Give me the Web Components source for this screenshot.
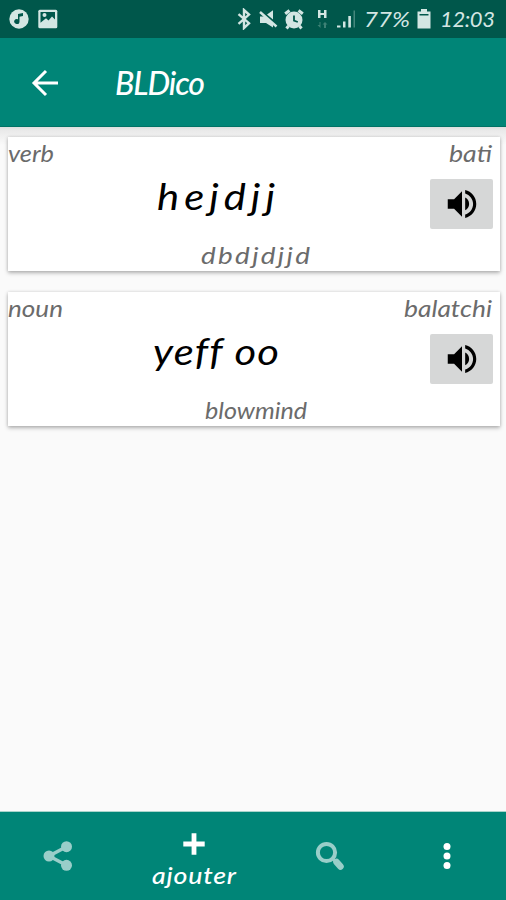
<!DOCTYPE html>
<html lang="fr">
<head>
<meta charset="utf-8">
<title>BLDico</title>
<style>
    body {
        margin: 0;
        background: #fafafa;
        font-family: Lato, "Open Sans", sans-serif;
        font-style: italic;
    }
</style>
</head>
<body>
<dico-app>
    <status-bar slot="status" battery="77%" time="12:03"></status-bar>
    <app-bar slot="header"><fit-text width="90">BLDico</fit-text></app-bar>
    <word-card>
        <fit-text slot="kind" width="46">verb</fit-text>
        <fit-text slot="language" width="43">bati</fit-text>
        <fit-text slot="word" width="118">hejdjj</fit-text>
        <fit-text slot="meaning" width="109">dbdjdjjd</fit-text>
    </word-card>
    <word-card>
        <fit-text slot="kind" width="55">noun</fit-text>
        <fit-text slot="language" width="88">balatchi</fit-text>
        <fit-text slot="word" width="125">yeff oo</fit-text>
        <fit-text slot="meaning" width="102">blowmind</fit-text>
    </word-card>
    <bottom-nav slot="footer"><fit-text width="84">ajouter</fit-text></bottom-nav>
</dico-app>

<script>
function attach(element, html) {
    const template = document.createElement('template');
    template.innerHTML = html;
    element.attachShadow({mode: 'open'});
    element.shadowRoot.appendChild(template.content.cloneNode(true));
}

class DicoApp extends HTMLElement {
    constructor() {
        super();
        attach(this, `
            <style>
                :host {
                    display: flex;
                    flex-direction: column;
                    height: 900px;
                    overflow: hidden;
                }

                main {
                    flex: 1;
                    display: flex;
                    flex-direction: column;
                    gap: 21px;
                    padding: 10px 6px 0 8px;
                    background: linear-gradient(#dcdfde, #e9e9e9 3px, #f0f0f0 9px, #fafafa 18px);
                }
            </style>
            <slot name="status"></slot>
            <slot name="header"></slot>
            <main><slot></slot></main>
            <slot name="footer"></slot>
        `);
    }
}

// <fit-text width="90">text</fit-text> fills the given width:
// the letters are stretched a little, the rest goes between them
class FitText extends HTMLElement {
    constructor() {
        super();
        attach(this, `
            <style>
                :host {
                    display: inline-block;
                    text-align: left;
                    white-space: nowrap;
                }

                span {
                    display: inline-block;
                    transform-origin: 0 50%;
                }
            </style>
            <span><slot></slot></span>
        `);
    }

    connectedCallback() {
        const span = this.shadowRoot.querySelector('span');
        const width = Number(this.getAttribute('width'));
        const natural = span.getBoundingClientRect().width;
        const stretch = Math.min(1.16, Math.max(1, width / natural));
        const space = (width / stretch - natural) / (this.textContent.length - 1);
        span.style.letterSpacing = space + 'px';
        span.style.transform = 'scaleX(' + stretch + ')';
        this.style.width = width + 'px';
    }
}

class StatusBar extends HTMLElement {
    constructor() {
        super();
        attach(this, `
            <style>
                :host {
                    display: flex;
                    align-items: center;
                    box-sizing: border-box;
                    flex: none;
                    height: 38px;
                    padding: 0 11px 0 9px;
                    background: #00574b;
                    color: #d3e6e3;
                    font-size: 22px;
                    line-height: 38px;
                }

                svg {
                    display: block;
                    flex: none;
                    fill: currentColor;
                }

                .image { margin-left: 9px; }
                .bluetooth { margin-left: auto; }
                .mute { margin-left: 8px; }
                .alarm { margin-left: 6px; }
                .network { margin-left: 12px; }
                .signal { margin-left: 9px; }
                .battery { margin-left: 8px; }
                .level { margin-left: 7px; }
                .time { margin-left: 9px; }
            </style>
            <svg class="music" width="20" height="20" viewBox="0 0 20 20">
                <circle cx="10" cy="10" r="9.7"/>
                <path fill="#00574b" d="M9 5l5-1v3l-3.500.8v4.700a2.700 2.500 0 1 1-1.500-2.200z"/>
            </svg>
            <svg class="image" width="20" height="20" viewBox="0 0 20 20">
                <rect x=".3" y=".7" width="19" height="18.500" rx="1.500"/>
                <path fill="#00574b" d="M2.500 3H17v7.500l-3-3-3.500 4-2.500-2.200-5.500 4.500z"/>
                <circle cx="6.500" cy="6" r="2"/>
            </svg>
            <svg class="bluetooth" width="14" height="22" viewBox="0 0 14 22">
                <path fill="none" stroke="currentColor" stroke-width="2.400" d="M1.500 6.200l10.500 9-5 4.800V2l5 4.600-10.500 9.200"/>
            </svg>
            <svg class="mute" width="19" height="20" viewBox="0 0 19 20">
                <path d="M1 7.500h5L14 14v4.500L7 14H1zM8 5.500L14 1.200v9.300z"/>
                <path stroke="currentColor" stroke-width="2.400" d="M1 3l16.500 14.500"/>
            </svg>
            <svg class="alarm" width="20" height="21" viewBox="0 0 20 21">
                <circle cx="10" cy="11" r="8.500"/>
                <path fill="none" stroke="currentColor" stroke-width="3" d="M1.200 4.800L5.500 1.500M18.800 4.800L14.500 1.500M4.500 17l-2 2.500M15.500 17l2 2.500"/>
                <path fill="none" stroke="#00574b" stroke-width="1.800" d="M10 6.500v5.200l3.800 1.300"/>
            </svg>
            <svg class="network" width="12" height="20" viewBox="0 0 12 20">
                <path d="M2 1h2.500v3H8V1h2.500v8H8V6H4.500v3H2z"/>
                <path fill="#3d8175" d="M3.500 13v3h-2l3 3V13zM8 19v-3.500H6.500L9 13l2.500 2.500H10V19z"/>
            </svg>
            <svg class="signal" width="19" height="20" viewBox="0 0 19 20">
                <path d="M0 16.500h3.500v2H0zM6 12.500h2.500v6H6zM11.300 7h2.600v11.500h-2.600z"/>
                <path fill="#45877d" d="M16.500 1.500H18v17h-1.500z"/>
            </svg>
            <fit-text class="battery" width="46"></fit-text>
            <svg class="level" width="14" height="20" viewBox="0 0 14 20">
                <path d="M4 0h6v2.500h3.500v17H.5v-17H4z"/>
                <path fill="#00574b" d="M2.500 5h9v1.500h-9z"/>
            </svg>
            <fit-text class="time" width="55"></fit-text>
        `);
        this.shadowRoot.querySelector('.battery').textContent = this.getAttribute('battery');
        this.shadowRoot.querySelector('.time').textContent = this.getAttribute('time');
    }
}

class AppBar extends HTMLElement {
    constructor() {
        super();
        attach(this, `
            <style>
                :host {
                    display: flex;
                    align-items: center;
                    box-sizing: border-box;
                    flex: none;
                    height: 89px;
                    padding-left: 31px;
                    background: #008577;
                    border-bottom: 1px solid #007265;
                    color: white;
                    font-size: 32px;
                    font-weight: 500;
                    line-height: 89px;
                }

                svg { margin: 2px 56px 0 0; }
            </style>
            <svg width="28" height="28" viewBox="0 0 28 28">
                <path fill="none" stroke="white" stroke-width="3" d="M27 14H3M15 2L3 14l12 12"/>
            </svg>
            <slot></slot>
        `);
    }
}

class WordCard extends HTMLElement {
    constructor() {
        super();
        attach(this, `
            <style>
                :host {
                    display: flex;
                    flex-direction: column;
                    box-sizing: border-box;
                    height: 134px;
                    background: white;
                    box-shadow: 0 2px 4px rgba(0, 0, 0, .28), 0 0 3px rgba(0, 0, 0, .12);
                    color: #6b6b6b;
                    font-size: 24px;
                    line-height: 31px;
                }

                .top {
                    display: flex;
                    justify-content: space-between;
                    padding-right: 8px;
                    height: 31px;
                }

                .middle {
                    display: flex;
                    height: 71px;
                    padding-right: 7px;
                }

                .word {
                    flex: 1;
                    padding: 4px 7px 0 0;
                    color: black;
                    font-size: 36px;
                    line-height: 48px;
                    text-align: center;
                }

                .meaning {
                    padding-left: 3px;
                    text-align: center;
                }

                button {
                    display: flex;
                    align-items: center;
                    justify-content: center;
                    width: 63px;
                    height: 50px;
                    margin: 11px 0 0;
                    padding: 0;
                    border: 0;
                    border-radius: 2px;
                    background: #d6d7d7;
                }
            </style>
            <div class="top"><slot name="kind"></slot><slot name="language"></slot></div>
            <div class="middle">
                <div class="word"><slot name="word"></slot></div>
                <button aria-label="Ecouter">
                    <svg width="38" height="38" viewBox="0 0 24 24">
                        <path d="M3 9v6h4l5 5V4L7 9H3zm13.500 3c0-1.770-1.020-3.290-2.500-4.030v8.050c1.480-.730 2.500-2.250 2.500-4.020zM14 3.230v2.060c2.890.860 5 3.540 5 6.710s-2.110 5.850-5 6.710v2.060c4.010-.910 7-4.490 7-8.770s-2.990-7.860-7-8.770z"/>
                    </svg>
                </button>
            </div>
            <div class="meaning"><slot name="meaning"></slot></div>
        `);
    }
}

class BottomNav extends HTMLElement {
    constructor() {
        super();
        attach(this, `
            <style>
                :host {
                    display: flex;
                    box-sizing: border-box;
                    flex: none;
                    height: 89px;
                    background: #008577;
                    border-top: 1px solid #a9d4cb;
                    color: white;
                    font-size: 23px;
                    font-weight: 500;
                    line-height: 28px;
                }

                .item {
                    display: flex;
                    flex-direction: column;
                    align-items: center;
                    justify-content: center;
                    width: 116px;
                }

                .item.active {
                    width: 156px;
                    justify-content: flex-start;
                    padding-top: 21px;
                    box-sizing: border-box;
                    gap: 6px;
                }

                .item:last-child { width: 118px; }

                svg { display: block; }
            </style>
            <div class="item">
                <svg width="30" height="30" viewBox="0 0 30 30">
                    <g fill="#99cec9">
                        <circle cx="6" cy="15" r="5.500"/>
                        <circle cx="23.500" cy="5.700" r="5.500"/>
                        <circle cx="23.500" cy="24.300" r="5.500"/>
                    </g>
                    <path fill="none" stroke="#99cec9" stroke-width="3.500" d="M23.500 5.700L6 15l17.500 9.300"/>
                </svg>
            </div>
            <div class="item active">
                <svg width="22" height="22" viewBox="0 0 22 22">
                    <path stroke="white" stroke-width="4.800" d="M11 .3v21.400M.3 11h21.400"/>
                </svg>
                <slot></slot>
            </div>
            <div class="item">
                <svg width="30" height="30" viewBox="0 0 30 30">
                    <g fill="none" stroke="#99cec9">
                        <circle cx="11.500" cy="11.500" r="8.600" stroke-width="4"/>
                        <path stroke-width="3" d="M17.500 17.500l4 4"/>
                        <path stroke-width="6.500" stroke-linecap="round" d="M21.500 21l4 4.500"/>
                    </g>
                </svg>
            </div>
            <div class="item">
                <svg width="8" height="28" viewBox="0 0 8 28" fill="white">
                    <circle cx="4" cy="4.500" r="3.500"/>
                    <circle cx="4" cy="14" r="3.500"/>
                    <circle cx="4" cy="23.500" r="3.500"/>
                </svg>
            </div>
        `);
    }
}

window.customElements.define('dico-app', DicoApp);
window.customElements.define('status-bar', StatusBar);
window.customElements.define('app-bar', AppBar);
window.customElements.define('word-card', WordCard);
window.customElements.define('bottom-nav', BottomNav);
// last, so that the text is already styled when it is measured
window.customElements.define('fit-text', FitText);
</script>
</body>
</html>
